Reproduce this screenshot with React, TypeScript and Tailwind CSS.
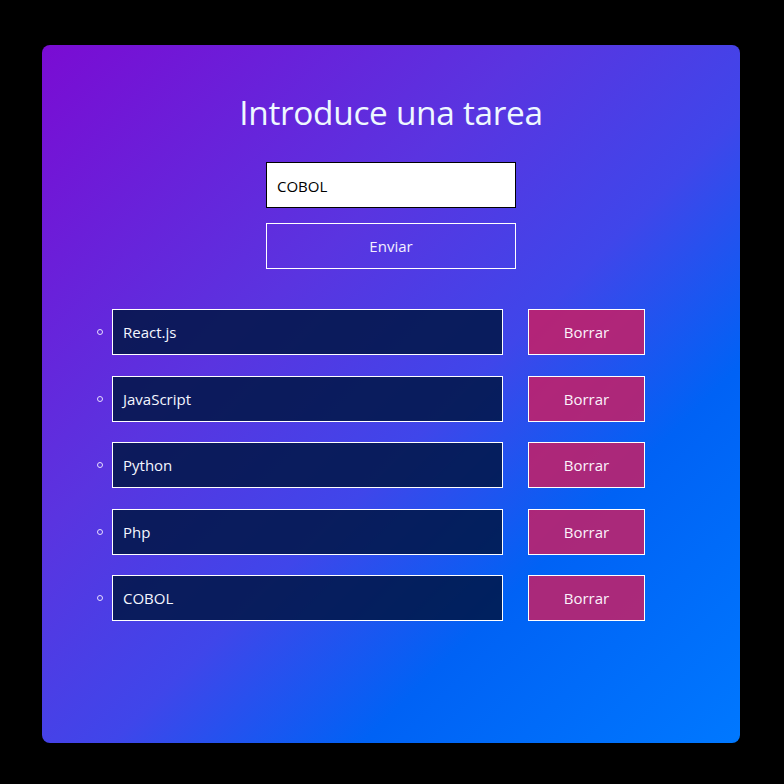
const tareas = ["React.js", "JavaScript", "Python", "Php", "COBOL"];

export default function App() {
  return (
    <div className="w-[784px] h-[784px] bg-black pt-[45px] pl-[42px] font-['Open_Sans',sans-serif]">
      <div className="w-[698px] h-[698px] rounded-[8px] bg-[linear-gradient(135deg,#7a0cd3_0%,#5a34e0_35%,#3f46ea_55%,#0062f5_73%,#0078ff_100%)] flex flex-col items-center">
        <h1 className="mt-[43px] h-[48px] leading-[48px] text-[33.4px] text-[#eef8ff] tracking-[-0.3px]">
          Introduce una tarea
        </h1>
        <input
          type="text"
          defaultValue="COBOL"
          className="mt-[26px] w-[250px] h-[46px] bg-white border border-black px-[10px] pt-[1px] text-[15px] text-black outline-none"
        />
        <button className="mt-[15px] w-[250px] h-[46px] border border-white pt-[1px] text-[15px] text-[#f4f0ff]">
          Enviar
        </button>
        <ul className="mt-[40px] self-start pl-[55px] flex flex-col gap-[20.5px]">
          {tareas.map((t) => (
            <li key={t} className="flex items-center">
              <span className="w-[6px] h-[6px] rounded-full border border-[#e6dcff] mr-[9px]" />
              <div className="w-[391px] h-[46px] flex items-center px-[10px] pt-[1px] bg-[rgba(0,22,70,0.86)] border border-white text-[15px] text-[#f4f6ff]">
                {t}
              </div>
              <button className="ml-[25px] w-[117px] h-[46px] pt-[1px] bg-[rgba(200,30,100,0.85)] border border-white text-[15px] text-[#fbf2fb]">
                Borrar
              </button>
            </li>
          ))}
        </ul>
      </div>
    </div>
  );
}
